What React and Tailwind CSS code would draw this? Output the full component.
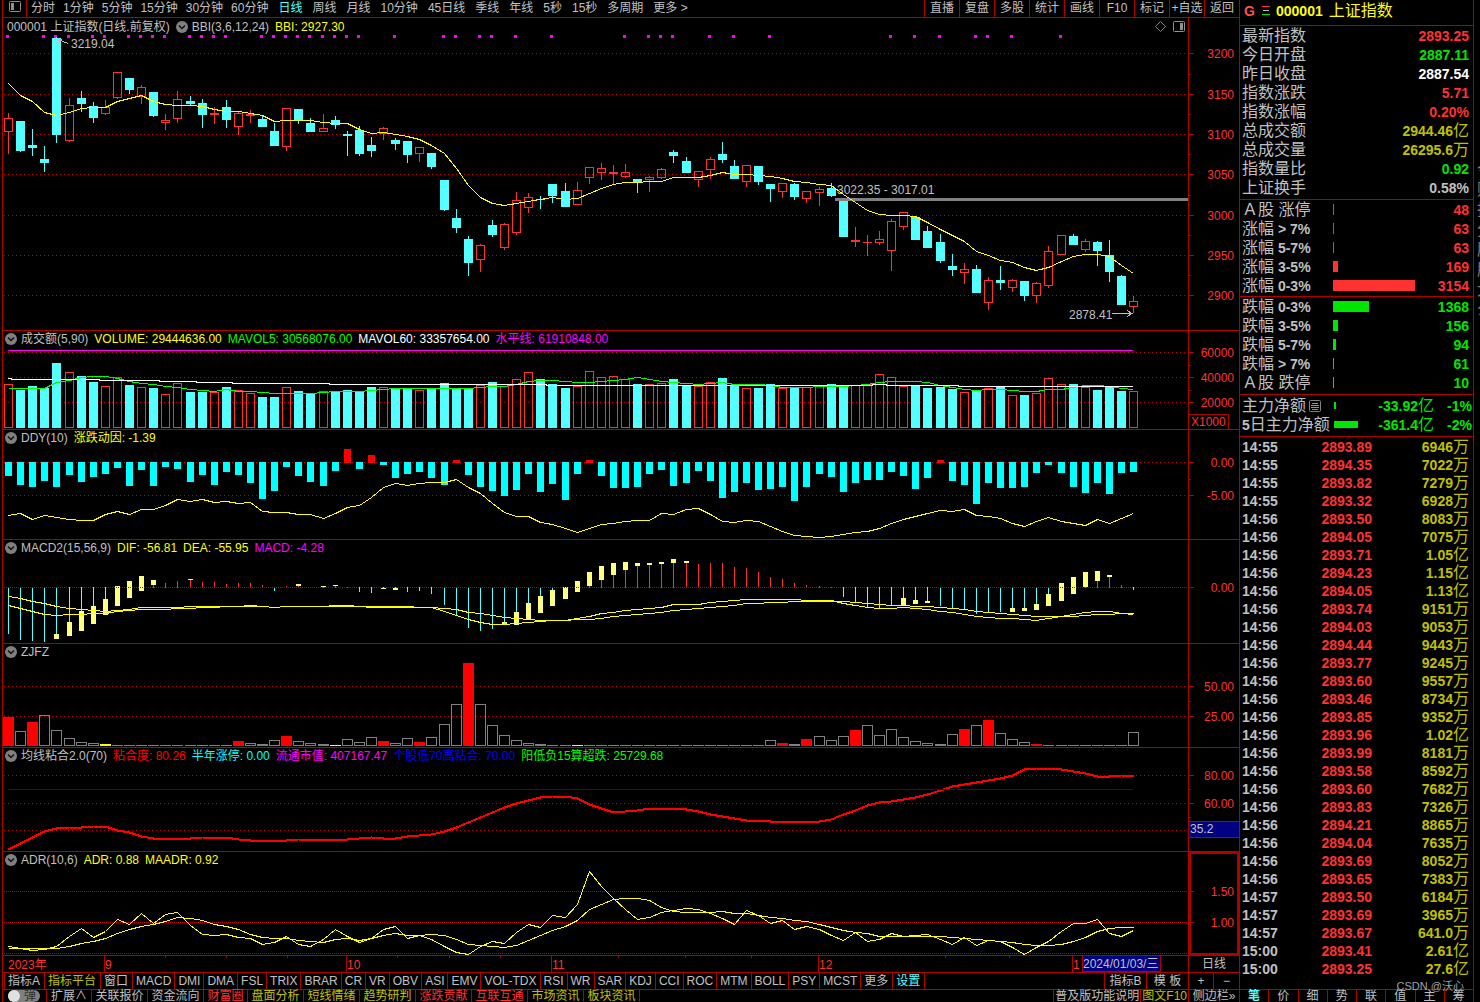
import React from 'react';

// [high, top, bottom, low, up]
const CANDLES = [
  [113, 118, 132, 154, 1], [121, 121, 151, 152, 0], [129, 145, 148, 156, 0], [146, 159, 163, 172, 0],
  [37, 38, 135, 143, 0], [98, 105, 141, 142, 1], [91, 98, 104, 112, 0], [102, 106, 118, 123, 0],
  [100, 107, 114, 115, 1], [72, 72, 98, 99, 1], [78, 78, 90, 94, 0], [85, 87, 97, 104, 1],
  [92, 92, 116, 117, 0], [114, 120, 123, 130, 1], [91, 99, 119, 123, 1], [96, 101, 104, 106, 0],
  [99, 103, 115, 128, 0], [107, 113, 115, 124, 1], [100, 107, 120, 128, 0], [112, 113, 127, 135, 1],
  [110, 114, 116, 123, 1], [116, 119, 127, 127, 0], [123, 131, 146, 146, 0], [108, 108, 147, 151, 1],
  [109, 109, 121, 124, 0], [118, 123, 132, 132, 0], [114, 128, 132, 132, 1], [116, 120, 125, 129, 0],
  [131, 134, 136, 156, 0], [126, 130, 154, 156, 0], [137, 145, 151, 157, 0], [127, 128, 134, 140, 1],
  [138, 140, 144, 150, 0], [141, 141, 155, 163, 0], [147, 147, 154, 162, 1], [153, 153, 167, 169, 0],
  [180, 180, 210, 211, 0], [209, 218, 228, 233, 0], [236, 239, 263, 276, 0], [244, 245, 260, 272, 1],
  [220, 225, 235, 237, 0], [223, 224, 248, 250, 1], [192, 200, 233, 235, 1], [193, 197, 208, 213, 1],
  [196, 199, 200, 209, 0], [184, 184, 196, 203, 0], [183, 191, 207, 207, 0], [182, 190, 205, 205, 1],
  [167, 167, 178, 184, 1], [163, 168, 173, 180, 1], [165, 172, 174, 184, 1], [164, 172, 177, 178, 1],
  [179, 179, 182, 193, 0], [176, 177, 180, 192, 1], [168, 169, 178, 179, 1], [150, 152, 156, 163, 0],
  [157, 161, 173, 173, 0], [171, 171, 180, 187, 1], [157, 159, 170, 179, 1], [142, 154, 160, 163, 0],
  [160, 166, 179, 179, 0], [165, 165, 182, 187, 1], [166, 166, 182, 185, 0], [184, 184, 189, 202, 0],
  [183, 183, 192, 198, 1], [183, 184, 197, 200, 0], [191, 191, 199, 203, 1], [187, 189, 193, 206, 1],
  [183, 188, 196, 197, 0], [201, 201, 237, 237, 0], [227, 240, 242, 247, 1], [235, 242, 243, 256, 1],
  [231, 239, 243, 245, 1], [219, 221, 251, 271, 1], [212, 212, 227, 230, 1], [217, 217, 240, 240, 0],
  [226, 231, 248, 248, 0], [234, 242, 261, 263, 0], [254, 266, 270, 276, 0], [263, 269, 273, 284, 1],
  [265, 269, 293, 293, 0], [277, 280, 303, 310, 1], [266, 280, 283, 290, 0], [279, 280, 288, 292, 1],
  [281, 281, 296, 301, 0], [282, 283, 296, 303, 1], [246, 251, 286, 288, 1], [235, 235, 255, 255, 1],
  [234, 236, 245, 245, 0], [239, 241, 250, 252, 1], [241, 242, 251, 266, 0], [240, 255, 272, 282, 0],
  [275, 276, 305, 305, 0], [296, 301, 307, 313, 1]
];

const BBI = [
  83, 95, 101, 112, 115, 112, 108, 107, 107, 101, 98, 95, 101, 104, 105, 105, 106, 109, 111, 111, 113, 115, 121, 120,
  120, 120, 122, 123, 123, 129, 133, 132, 134, 136, 139, 145, 153, 168, 185, 197, 203, 205, 203, 201, 199, 197, 199,
  198, 193, 188, 184, 182, 182, 181, 181, 177, 177, 177, 175, 172, 174, 174, 175, 176, 178, 181, 182, 184, 185, 194,
  202, 210, 214, 215, 215, 216, 222, 229, 235, 241, 251, 255, 260, 262, 267, 270, 267, 261, 256, 254, 254, 256, 265, 273
];

const SIGNALS = [
  0, 3, 4, 5, 7, 8, 10, 11, 12, 13, 15, 16, 17, 18, 21, 22, 23, 24, 25, 26, 27, 28, 29, 32, 36, 37, 39, 40, 42, 45,
  51, 53, 54, 55, 58, 60, 63, 73, 75, 77, 80, 81, 83, 87
];

const VOLUME = [
  384, 390, 386, 388, 363, 372, 376, 382, 386, 377, 385, 387, 388, 394, 383, 392, 392, 392, 387, 390, 393, 397, 397,
  387, 391, 393, 391, 391, 390, 391, 387, 387, 389, 388, 390, 388, 383, 388, 389, 385, 382, 386, 379, 372, 379, 384,
  388, 386, 371, 377, 376, 379, 384, 384, 383, 379, 385, 386, 382, 378, 385, 388, 388, 384, 388, 387, 387, 386, 384,
  386, 385, 384, 374, 377, 386, 385, 388, 387, 389, 392, 390, 388, 386, 395, 395, 393, 378, 384, 384, 387, 390, 386,
  391, 391
];

const MAVOL5 = [
  388, 388, 388, 388, 382, 380, 377, 376, 376, 378, 381, 383, 384, 386, 387, 389, 390, 391, 389, 391, 391, 392, 393,
  393, 393, 393, 392, 391, 391, 391, 390, 389, 388, 388, 388, 388, 388, 388, 388, 387, 386, 386, 384, 381, 380, 380,
  381, 382, 382, 381, 380, 379, 377, 379, 381, 382, 383, 384, 383, 382, 384, 384, 384, 385, 387, 387, 387, 386, 386,
  386, 385, 384, 382, 381, 381, 381, 382, 385, 387, 389, 390, 389, 389, 390, 391, 391, 389, 389, 387, 385, 385, 386,
  388, 389
];

const MAVOL60 = '8,378 15,379 99,379 100,380 159,380 160,381 196,381 197,382 232,382 233,383 329,383 330,384 546,384 547,385 872,385 873,384 886,384 887,385 958,385 959,386 1133,386';

const DDY = [
  476, 485, 487, 481, 487, 475, 482, 477, 474, 468, 486, 470, 486, 467, 469, 482, 475, 485, 472, 475, 483, 499, 491,
  467, 476, 482, 486, 471, 449, 469, 455, 465, 478, 474, 472, 478, 485, 460, 475, 487, 491, 496, 490, 474, 492, 484,
  500, 474, 460, 476, 488, 488, 487, 474, 470, 486, 483, 471, 481, 498, 492, 483, 490, 489, 487, 501, 487, 474, 477,
  492, 483, 480, 480, 472, 476, 489, 478, 460, 481, 485, 504, 483, 488, 488, 487, 473, 465, 473, 487, 493, 483, 494,
  473, 472
];

const DDY_LINE = [
  515, 513, 519, 515, 517, 519, 520, 520, 514, 511, 514, 509, 509, 505, 499, 501, 499, 502, 501, 503, 502, 511, 512,
  512, 514, 514, 518, 513, 507, 505, 497, 487, 483, 485, 483, 482, 482, 479, 487, 493, 503, 512, 516, 516, 522, 524,
  528, 532, 528, 524, 523, 521, 520, 520, 513, 514, 509, 508, 514, 521, 522, 520, 521, 526, 531, 535, 536, 537, 536,
  534, 532, 531, 528, 523, 519, 516, 513, 510, 511, 509, 515, 516, 518, 523, 526, 521, 517, 521, 523, 525, 519, 523,
  518, 513
];

// a number is a plain stick, a pair is a block on the stick
const MACD = [
  633, 639, 640, 641, [634, 639], [622, 636], [611, 631], [606, 624], [599, 615], [586, 606], [581, 598], [576, 591],
  [580, 585], 583, 581, [579, 580], 582, 582, 584, 583, 583, 585, 590, 586, [584, 586], 587, [586, 587], [585, 586],
  587, 591, 592, [588, 589], [588, 590], 591, 590, 593, 604, 614, 627, 630, 628, [622, 625], [612, 625], [603, 620],
  [596, 613], [590, 606], [587, 599], [581, 592], [572, 586], [566, 580], [563, 575], [562, 570], [563, 566],
  [563, 565], [562, 564], [559, 563], [561, 563], 564, 563, 563, 567, 568, 572, 577, 579, 583, 585, 586, 587, 596,
  602, 606, 608, 604, [598, 605], [600, 604], [601, 603], 605, 608, 609, 613, 612, 611, [608, 612], [608, 611],
  [604, 610], [594, 606], [583, 601], [577, 594], [572, 587], [571, 581], [575, 577], 585, 589
];

const DEA = [
  596, 598, 601, 603, 606, 608, 609, 610, 611, 610, 609, 607, 607, 607, 607, 606, 606, 606, 606, 606, 606, 606, 607,
  606, 606, 606, 606, 606, 606, 606, 607, 607, 607, 607, 607, 607, 608, 609, 612, 613, 615, 617, 618, 619, 620, 620,
  620, 619, 619, 618, 616, 615, 614, 613, 612, 610, 609, 608, 607, 606, 605, 603, 603, 602, 602, 601, 601, 601, 601,
  601, 602, 603, 604, 605, 605, 606, 606, 607, 608, 609, 611, 612, 613, 614, 615, 616, 616, 616, 616, 615, 614, 614,
  613, 613
];

const DIF = [
  605, 608, 611, 614, 615, 614, 614, 613, 613, 611, 610, 609, 609, 609, 608, 608, 607, 607, 606, 606, 605, 606, 607,
  606, 606, 606, 606, 605, 605, 606, 606, 606, 606, 606, 607, 607, 611, 615, 619, 622, 624, 624, 623, 622, 621, 620,
  620, 618, 616, 613, 612, 610, 609, 608, 607, 604, 604, 604, 602, 601, 600, 599, 599, 599, 599, 599, 600, 600, 600,
  603, 605, 607, 608, 608, 607, 608, 609, 611, 612, 614, 616, 617, 618, 618, 619, 620, 618, 616, 614, 612, 611, 611,
  613, 614
];

const ZJFZ = [
  717, 731, 722, 715, 730, 738, 742, 743, 744, 745, 745, 745, 745, 745, 745, 745, 745, 745, 745, 741, 743, 744, 740,
  736, 741, 743, 744, 745, 739, 742, 737, 741, 743, 738, 742, 737, 724, 704, 663, 704, 725, 735, 740, 743, 744, 745,
  745, 745, 745, 745, 745, 745, 745, 745, 745, 745, 745, 745, 745, 745, 745, 745, 745, 740, 743, 744, 739, 736, 740,
  736, 730, 725, 735, 729, 737, 741, 743, 744, 734, 729, 725, 720, 733, 739, 742, 744, 745, 745, 745, 745, 745, 745,
  745, 732
];
const ZJFZ_RED = [0, 2, 19, 23, 31, 34, 38, 64, 66, 70, 79, 81, 85];
const ZJFZ_YELLOW = [8, 27, 47];

const NIANHE = [
  849, 843, 837, 831, 828, 827, 827, 826, 826, 830, 832, 836, 838, 838, 838, 838, 837, 837, 837, 839, 840, 840, 840,
  840, 839, 839, 839, 839, 839, 838, 837, 838, 838, 836, 835, 834, 831, 827, 822, 817, 812, 807, 803, 800, 797, 796,
  796, 798, 804, 808, 812, 811, 810, 808, 808, 808, 809, 811, 814, 816, 818, 820, 820, 821, 821, 821, 821, 821, 819,
  814, 810, 805, 802, 801, 799, 797, 794, 790, 786, 784, 782, 780, 778, 775, 769, 768, 768, 769, 771, 773, 776, 776,
  775, 775
];

const ADR = [
  946, 948, 950, 949, 946, 936, 928, 937, 931, 919, 924, 913, 923, 914, 912, 925, 934, 935, 934, 937, 938, 944, 942,
  936, 944, 946, 939, 929, 936, 942, 938, 929, 926, 938, 935, 939, 946, 952, 954, 946, 941, 943, 932, 924, 927, 915,
  917, 904, 871, 886, 898, 909, 919, 917, 912, 910, 908, 909, 913, 918, 924, 910, 915, 923, 920, 929, 926, 929, 935,
  940, 932, 941, 939, 933, 936, 935, 934, 939, 944, 937, 945, 940, 941, 947, 954, 947, 941, 931, 923, 923, 919, 933,
  936, 930
];

const MAADR = [
  948, 948, 948, 948, 948, 946, 943, 941, 938, 933, 929, 926, 924, 921, 917, 918, 920, 924, 926, 929, 934, 937, 938,
  938, 940, 941, 942, 939, 938, 940, 938, 935, 933, 935, 935, 934, 935, 939, 944, 945, 946, 947, 945, 940, 935, 930,
  926, 920, 909, 904, 899, 898, 898, 900, 907, 911, 912, 912, 912, 911, 913, 913, 915, 917, 918, 920, 921, 924, 927,
  930, 932, 933, 936, 936, 936, 936, 936, 936, 937, 938, 939, 940, 941, 942, 944, 945, 945, 944, 941, 937, 931, 928,
  927, 927
];

const MINUTES = ['分时', '1分钟', '5分钟', '15分钟', '30分钟', '60分钟'];
const PERIODS = ['日线', '周线', '月线', '10分钟', '45日线', '季线', '年线', '5秒', '15秒', '多周期', '更多 >'];
const TOOLS = ['直播', '复盘', '多股', '统计', '画线', 'F10', '标记', '+自选', '返回'];

const INDICATORS = [
  '指标A', '指标平台', '窗口', 'MACD', 'DMI', 'DMA', 'FSL', 'TRIX', 'BRAR', 'CR', 'VR', 'OBV', 'ASI', 'EMV',
  'VOL-TDX', 'RSI', 'WR', 'SAR', 'KDJ', 'CCI', 'ROC', 'MTM', 'BOLL', 'PSY', 'MCST', '更多', '设置'
];

const EXTRAS = [
  { label: '关联报价', color: 'text-[#c0c0c0]' },
  { label: '资金流向', color: 'text-[#c0c0c0]' },
  { label: '财富圈', color: 'text-[#ff3232]' },
  { label: '盘面分析', color: 'text-[#c0c000]' },
  { label: '短线情绪', color: 'text-[#c0c000]' },
  { label: '趋势研判', color: 'text-[#c0c000]' },
  { label: '涨跌贡献', color: 'text-[#ff3232]' },
  { label: '互联互通', color: 'text-[#ff3232]' },
  { label: '市场资讯', color: 'text-[#c0c000]' },
  { label: '板块资讯', color: 'text-[#c0c000]' }
];

const QUOTES = [
  { label: '最新指数', value: '2893.25', color: 'text-[#ff3232]' },
  { label: '今日开盘', value: '2887.11', color: 'text-[#00e600]' },
  { label: '昨日收盘', value: '2887.54', color: 'text-white' },
  { label: '指数涨跌', value: '5.71', color: 'text-[#ff3232]' },
  { label: '指数涨幅', value: '0.20%', color: 'text-[#ff3232]' },
  { label: '总成交额', value: '2944.46', unit: '亿', color: 'text-[#c0c000]' },
  { label: '总成交量', value: '26295.6', unit: '万', color: 'text-[#c0c000]' },
  { label: '指数量比', value: '0.92', color: 'text-[#00e600]' },
  { label: '上证换手', value: '0.58%', color: 'text-[#c0c0c0]' }
];

const RISES = [
  { label: 'Ａ股 涨停', value: 48, width: 1 },
  { label: '涨幅', range: '> 7%', value: 63, width: 1 },
  { label: '涨幅', range: '5-7%', value: 63, width: 1 },
  { label: '涨幅', range: '3-5%', value: 169, width: 5 },
  { label: '涨幅', range: '0-3%', value: 3154, width: 82 }
];

const FALLS = [
  { label: '跌幅', range: '0-3%', value: 1368, width: 36 },
  { label: '跌幅', range: '3-5%', value: 156, width: 5 },
  { label: '跌幅', range: '5-7%', value: 94, width: 3 },
  { label: '跌幅', range: '> 7%', value: 61, width: 1 },
  { label: 'Ａ股 跌停', value: 10, width: 1 }
];

const TICKS = [
  ['14:55', '2893.89', '6946', '万'], ['14:55', '2894.35', '7022', '万'], ['14:55', '2893.82', '7279', '万'],
  ['14:55', '2893.32', '6928', '万'], ['14:56', '2893.50', '8083', '万'], ['14:56', '2894.05', '7075', '万'],
  ['14:56', '2893.71', '1.05', '亿'], ['14:56', '2894.23', '1.15', '亿'], ['14:56', '2894.05', '1.13', '亿'],
  ['14:56', '2893.74', '9151', '万'], ['14:56', '2894.03', '9053', '万'], ['14:56', '2894.44', '9443', '万'],
  ['14:56', '2893.77', '9245', '万'], ['14:56', '2893.60', '9557', '万'], ['14:56', '2893.46', '8734', '万'],
  ['14:56', '2893.85', '9352', '万'], ['14:56', '2893.96', '1.02', '亿'], ['14:56', '2893.99', '8181', '万'],
  ['14:56', '2893.58', '8592', '万'], ['14:56', '2893.60', '7682', '万'], ['14:56', '2893.83', '7326', '万'],
  ['14:56', '2894.21', '8865', '万'], ['14:56', '2894.04', '7635', '万'], ['14:56', '2893.69', '8052', '万'],
  ['14:56', '2893.65', '7383', '万'], ['14:57', '2893.50', '6184', '万'], ['14:57', '2893.69', '3965', '万'],
  ['14:57', '2893.67', '641.0', '万'], ['15:00', '2893.41', '2.61', '亿'], ['15:00', '2893.25', '27.6', '亿']
];

const barX = (i) => Math.floor(8.546 + i * 12.0976);
const toPoints = (values) => values.map((y, i) => `${barX(i) + 0.5},${y + 0.5}`).join(' ');

function Line({ values, color, width = 1 }) {
  return <polyline points={toPoints(values)} fill="none" stroke={color} strokeWidth={width} />;
}

function Grid({ ys, dense }) {
  return ys.map((y) => (
    <line
      key={y}
      x1="4"
      x2="1188"
      y1={y + 0.5}
      y2={y + 0.5}
      stroke="#c00000"
      strokeDasharray={dense ? '1 1' : '1 3'}
    />
  ));
}

function Plot({ top, height, className, children }) {
  return (
    <svg
      viewBox={`3 ${top} 1185 ${height}`}
      preserveAspectRatio="none"
      shapeRendering="crispEdges"
      className={`block w-full ${className}`}
    >
      {children}
    </svg>
  );
}

function Axis({ top, height, className, labels, minor = [], children }) {
  return (
    <svg
      viewBox={`1189 ${top} 50 ${height}`}
      shapeRendering="crispEdges"
      className={`block w-[51px] shrink-0 border-l border-[#b00000] ${className}`}
    >
      {labels.map(([y, text]) => (
        <g key={y}>
          <rect x="1189" y={y} width="5" height="1" fill="#b00000" />
          <text x="1234" y={y + 5} textAnchor="end" fontSize="12" fill="#ff3232">{text}</text>
        </g>
      ))}
      {minor.map((y) => <rect key={y} x="1189" y={y} width="2" height="1" fill="#b00000" />)}
      {children}
    </svg>
  );
}

function FoldButton() {
  return (
    <button type="button" aria-label="指标菜单" className="h-3 w-3 shrink-0">
      <svg viewBox="0 0 12 12" className="block h-3 w-3">
        <circle cx="6" cy="6" r="6" fill="#808080" />
        <path d="M3 4.5 L6 7.5 L9 4.5" fill="none" stroke="#101010" strokeWidth="1.5" />
      </svg>
    </button>
  );
}

function PanelHeader({ title, values = [] }) {
  return (
    <div className="flex h-[17px] items-center gap-[6px] pb-[2px] pl-[2px] whitespace-nowrap">
      <div className="flex items-center gap-1">
        <FoldButton />
        <h2>{title}</h2>
      </div>
      {values.map(([text, color]) => <span key={text} className={color}>{text}</span>)}
    </div>
  );
}

function Panel({ header, plot, axis }) {
  return (
    <section className="flex border-b border-[#b00000]">
      <div className="min-w-0 flex-1">
        {header}
        {plot}
      </div>
      {axis}
    </section>
  );
}

function Candle({ x, data }) {
  const [high, top, bottom, low, up] = data;
  const color = up ? '#ff3232' : '#54ffff';
  return (
    <g>
      <rect x={x} y={high} width="1" height={top - high} fill={color} />
      <rect x={x} y={bottom} width="1" height={low - bottom} fill={color} />
      {up && bottom - top > 1 ? (
        <rect x={x - 3.5} y={top + 0.5} width="8" height={bottom - top - 1} fill="none" stroke={color} />
      ) : (
        <rect x={x - 4} y={top} width="9" height={bottom - top} fill={color} />
      )}
    </g>
  );
}

function PricePanel() {
  return (
    <Panel
      header={
        <div className="flex h-[17px] items-center gap-[6px] pl-1 whitespace-nowrap">
          <h1>000001 上证指数(日线.前复权)</h1>
          <div className="flex items-center gap-1">
            <FoldButton />
            <span>BBI(3,6,12,24)</span>
          </div>
          <span className="text-[#ffff00]">BBI: 2927.30</span>
          <div className="ml-auto flex items-center gap-[7px] pr-[3px]">
            <svg viewBox="0 0 11 11" className="h-[11px] w-[11px]">
              <path d="M5.5 0.5 L10.5 5.5 L5.5 10.5 L0.5 5.5 Z" fill="none" stroke="#808080" />
            </svg>
            <svg viewBox="0 0 12 11" className="h-[11px] w-3">
              <rect x="0.5" y="0.5" width="11" height="10" rx="1" fill="none" stroke="#909090" />
              <rect x="7" y="2" width="3" height="7" fill="#909090" />
            </svg>
          </div>
        </div>
      }
      plot={
        <Plot top={35} height={295} className="h-[295px]">
          <Grid ys={[53, 94, 134, 174, 215, 255, 295]} />
          {SIGNALS.map((i) => <rect key={i} x={barX(i) - 2} y="35" width="3" height="3" fill="#ff00ff" />)}
          {CANDLES.map((candle, i) => <Candle key={i} x={barX(i)} data={candle} />)}
          <rect x="835" y="198" width="353" height="3" fill="#808080" />
          <text x="837" y="194" fontSize="12" fill="#c0c0c0">3022.35 - 3017.01</text>
          <Line values={BBI} color="#ffff00" />
          <text x="71" y="48" fontSize="12" fill="#c0c0c0">3219.04</text>
          <path d="M68 43.5 L58 39.5 M58 39.5 h4 M58 39.5 v4" fill="none" stroke="#c0c0c0" />
          <text x="1069" y="319" fontSize="12" fill="#c0c0c0">2878.41</text>
          <path d="M1112 313.5 H1132 M1127 310.5 L1132 313.5 L1127 316.5" fill="none" stroke="#c0c0c0" />
        </Plot>
      }
      axis={
        <Axis
          top={18}
          height={312}
          className="h-[312px]"
          labels={[[53, '3200'], [94, '3150'], [134, '3100'], [174, '3050'], [215, '3000'], [255, '2950'], [295, '2900']]}
          minor={[74, 114, 154, 195, 235, 275]}
        />
      }
    />
  );
}

function VolumePanel() {
  return (
    <Panel
      header={
        <PanelHeader
          title="成交额(5,90)"
          values={[
            ['VOLUME: 29444636.00', 'text-[#ffff00]'],
            ['MAVOL5: 30568076.00', 'text-[#00ff00]'],
            ['MAVOL60: 33357654.00', 'text-white'],
            ['水平线: 61910848.00', 'text-[#ff00ff]']
          ]}
        />
      }
      plot={
        <Plot top={348} height={81} className="h-[81px]">
          <Grid ys={[352, 377, 402]} />
          {VOLUME.map((y, i) => (
            CANDLES[i][4] ? (
              <rect key={i} x={barX(i) - 3.5} y={y + 0.5} width="8" height={427 - y} fill="none" stroke="#ff3232" />
            ) : (
              <rect key={i} x={barX(i) - 4} y={y} width="9" height={428 - y} fill="#54ffff" />
            )
          ))}
          <rect x="8" y="350" width="1125" height="1" fill="#ff00ff" />
          <Line values={MAVOL5} color="#00ff00" />
          <polyline points={MAVOL60} transform="translate(0 0.5)" fill="none" stroke="#ffffff" />
        </Plot>
      }
      axis={
        <Axis
          top={331}
          height={98}
          className="h-[98px]"
          labels={[[352, '60000'], [377, '40000'], [402, '20000']]}
          minor={[365, 390]}
        >
          <path d="M1189 414.5 H1228.5 V429" fill="none" stroke="#b00000" />
          <text x="1191" y="426" fontSize="12" fill="#ff3232">X1000</text>
        </Axis>
      }
    />
  );
}

function DdyPanel() {
  return (
    <Panel
      header={<PanelHeader title="DDY(10)" values={[['涨跌动因: -1.39', 'text-[#ffff00]']]} />}
      plot={
        <Plot top={447} height={92} className="h-[92px]">
          <Grid ys={[462, 495]} />
          {DDY.map((y, i) => (
            <rect
              key={i}
              x={barX(i) - 3}
              y={Math.min(y, 462)}
              width="7"
              height={y < 462 ? 463 - y : y - 462}
              fill={y < 462 ? '#ff0000' : '#00ffff'}
            />
          ))}
          <Line values={DDY_LINE} color="#ffff00" />
        </Plot>
      }
      axis={
        <Axis top={430} height={109} className="h-[109px]" labels={[[462, '0.00'], [495, '-5.00']]} minor={[479]} />
      }
    />
  );
}

function MacdPanel() {
  return (
    <Panel
      header={
        <PanelHeader
          title="MACD2(15,56,9)"
          values={[
            ['DIF: -56.81', 'text-[#ffff00]'],
            ['DEA: -55.95', 'text-[#ffff00]'],
            ['MACD: -4.28', 'text-[#ff00ff]']
          ]}
        />
      }
      plot={
        <Plot top={557} height={86} className="h-[86px]">
          {MACD.map((bar, i) => {
            const end = Array.isArray(bar) ? bar[0] : bar;
            return (
              <g key={i}>
                <rect
                  x={barX(i)}
                  y={Math.min(end, 587)}
                  width="1"
                  height={Math.abs(587 - end) + 1}
                  fill={end > 587 ? '#54ffff' : '#ff3232'}
                />
                {Array.isArray(bar) && (
                  <rect x={barX(i) - 2} y={bar[0]} width="5" height={bar[1] - bar[0]} fill="#ffff80" />
                )}
              </g>
            );
          })}
          <Grid ys={[587]} dense />
          <Line values={DEA} color="#ffff00" />
          <Line values={DIF} color="#ffff00" />
        </Plot>
      }
      axis={<Axis top={540} height={103} className="h-[103px]" labels={[[587, '0.00']]} />}
    />
  );
}

function ZjfzPanel() {
  return (
    <Panel
      header={<PanelHeader title="ZJFZ" />}
      plot={
        <Plot top={661} height={86} className="h-[86px]">
          <Grid ys={[686, 716]} />
          {ZJFZ.map((y, i) => {
            if (ZJFZ_RED.includes(i) || ZJFZ_YELLOW.includes(i) || y > 743) {
              let color = '#808080';
              if (ZJFZ_RED.includes(i)) color = '#ff0000';
              if (ZJFZ_YELLOW.includes(i)) color = '#ffff00';
              return <rect key={i} x={barX(i) - 5} y={y} width="11" height={746 - y} fill={color} />;
            }
            return (
              <rect key={i} x={barX(i) - 4.5} y={y + 0.5} width="10" height={745 - y} fill="none" stroke="#808080" />
            );
          })}
        </Plot>
      }
      axis={
        <Axis top={644} height={103} className="h-[103px]" labels={[[686, '50.00'], [716, '25.00']]} minor={[701]} />
      }
    />
  );
}

function NianhePanel() {
  return (
    <Panel
      header={
        <PanelHeader
          title="均线粘合2.0(70)"
          values={[
            ['粘合度: 80.26', 'text-[#ff0000]'],
            ['半年涨停: 0.00', 'text-[#00ffff]'],
            ['流通市值: 407167.47', 'text-[#ff00ff]'],
            ['个股低70高粘合: 70.00', 'text-[#0000ff]'],
            ['阳低负15算超跌: 25729.68', 'text-[#00ff00]']
          ]}
        />
      }
      plot={
        <Plot top={765} height={86} className="h-[86px]">
          <Grid ys={[775, 803, 830]} />
          <Line values={NIANHE} color="#ff0000" width={2} />
          <rect x="8" y="789" width="1125" height="1" fill="#0000ff" />
        </Plot>
      }
      axis={
        <Axis
          top={748}
          height={103}
          className="h-[103px]"
          labels={[[775, '80.00'], [803, '60.00']]}
          minor={[789, 817]}
        >
          <rect x="1189" y="821" width="50" height="17" fill="#b00000" />
          <rect x="1189" y="822" width="50" height="15" fill="#000080" />
          <text x="1190" y="833" fontSize="12" fill="#c0c0c0">35.2</text>
        </Axis>
      }
    />
  );
}

function AdrPanel() {
  return (
    <Panel
      header={
        <PanelHeader
          title="ADR(10,6)"
          values={[['ADR: 0.88', 'text-[#ffff00]'], ['MAADR: 0.92', 'text-[#ffff00]']]}
        />
      }
      plot={
        <Plot top={869} height={86} className="h-[86px]">
          <Grid ys={[891, 922, 953]} dense />
          <Line values={ADR} color="#ffff00" />
          <Line values={MAADR} color="#ffff00" />
        </Plot>
      }
      axis={
        <Axis
          top={852}
          height={103}
          className="h-[103px]"
          labels={[[891, '1.50'], [922, '1.00']]}
          minor={[907, 938]}
        >
          <rect x="1190" y="853" width="48" height="101" fill="none" stroke="#b00000" strokeWidth="2" />
        </Axis>
      }
    />
  );
}

function DateRow() {
  return (
    <div className="flex border-b border-[#b00000]">
      <div className="min-w-0 flex-1">
        <Plot top={956} height={16} className="h-4">
          {[165, 226, 287, 397, 449, 500, 618, 685, 751, 945, 1009].map((x) => (
            <rect key={x} x={x} y="956" width="1" height="2" fill="#b00000" />
          ))}
          <text x="8" y="969" fontSize="12" fill="#ff3232">2023年</text>
          {[[104, '9'], [346, '10'], [551, '11'], [818, '12'], [1072, '1']].map(([x, month]) => (
            <g key={x}>
              <rect x={x} y="956" width="1" height="16" fill="#b00000" />
              <text x={x + 1} y="969" fontSize="12" fill="#ff3232">{month}</text>
            </g>
          ))}
          <rect x="1082" y="956" width="79" height="16" fill="#b00000" />
          <rect x="1083" y="956" width="77" height="15" fill="#000080" />
          <text x="1083" y="968" fontSize="12" fill="#c0c0c0">2024/01/03/三</text>
        </Plot>
      </div>
      <button type="button" className="h-4 w-[51px] shrink-0 border-l border-[#b00000]">日线</button>
    </div>
  );
}

function Toolbar() {
  return (
    <header className="flex h-[18px] border-b border-[#b00000] whitespace-nowrap">
      <button type="button" aria-label="侧栏" className="flex w-6 shrink-0 justify-center border-r border-[#b00000] pt-px">
        <svg viewBox="0 0 12 11" className="h-[11px] w-3">
          <rect x="0.5" y="0.5" width="11" height="10" rx="1" fill="none" stroke="#909090" />
          <rect x="2" y="2" width="3" height="7" fill="#909090" />
        </svg>
      </button>
      <nav className="flex flex-1 gap-[10px] overflow-hidden pl-1 leading-[15px]">
        <div className="flex gap-2">
          {MINUTES.map((name) => <button key={name} type="button">{name}</button>)}
        </div>
        {PERIODS.map((name) => (
          <button key={name} type="button" className={name === '日线' ? 'text-[#54ffff]' : ''}>{name}</button>
        ))}
      </nav>
      <div className="flex leading-[15px]">
        {TOOLS.map((name) => (
          <button key={name} type="button" className="w-[35px] border-l border-[#b00000]">{name}</button>
        ))}
      </div>
    </header>
  );
}

function IndicatorTabs() {
  const classOf = (name) => {
    if (name === '指标平台') return 'pr-1 pl-[3px] text-[#c0c000]';
    if (name === '设置') return 'pr-1 pl-[3px] text-[#54ffff]';
    return /[^A-Z-]/.test(name) ? 'pr-1 pl-[3px]' : 'px-[3px]';
  };

  return (
    <nav className="flex h-[17px] border-b border-[#b00000] whitespace-nowrap">
      <div className="flex flex-1 overflow-hidden pl-px">
        {INDICATORS.map((name) => (
          <button key={name} type="button" className={`border-l border-[#b00000] ${classOf(name)}`}>{name}</button>
        ))}
        <span className="border-l border-[#b00000]" />
      </div>
      <button type="button" className="w-[42px] border-l border-[#b00000]">指标B</button>
      <button type="button" className="w-[42px] border-l border-[#b00000]">模 板</button>
      <button type="button" className="w-[25px] border-l border-[#b00000]">+</button>
      <button type="button" className="w-[26px] border-l border-[#b00000]">−</button>
    </nav>
  );
}

function ExtraTabs() {
  return (
    <nav className="flex h-3 leading-3 whitespace-nowrap">
      <label className="relative flex w-[43px] shrink-0 items-center pl-[5px]">
        <input
          type="checkbox"
          className="h-3 w-8 appearance-none rounded-full bg-[#808080] before:block before:h-3 before:w-3 before:rounded-full before:bg-[#e0e0e0]"
        />
        <span className="absolute left-[21px] text-[#303030]">弹</span>
      </label>
      <button type="button" className="border-l border-[#b00000] px-1">扩展∧</button>
      {EXTRAS.map((item) => (
        <button
          key={item.label}
          type="button"
          className={`border-l border-[#b00000] ${item.label.length > 3 ? 'w-14' : 'w-11'} ${item.color}`}
        >
          {item.label}
        </button>
      ))}
      <span className="flex-1 border-l border-[#b00000]" />
      <button type="button" className="border-l border-[#b00000] px-px">普及版功能说明</button>
      <button type="button" className="border-l border-[#b00000] px-px text-[#c0c000]">图文F10</button>
      <button type="button" className="w-[51px] border-l border-[#b00000]">侧边栏»</button>
    </nav>
  );
}

function SpreadRow({ row, barColor, textColor }) {
  return (
    <div className="flex h-[19px] items-center">
      <dt className="w-[91px] whitespace-pre">
        {row.label}
        {row.range && <b className="text-sm leading-none"> {row.range}</b>}
      </dt>
      <dd className="flex flex-1 items-center justify-between pr-1">
        <span className={`h-[11px] ${barColor}`} style={{ width: row.width }} />
        <b className={`text-sm ${textColor}`}>{row.value}</b>
      </dd>
    </div>
  );
}

function FundRow({ label, barClass, value, percent, icon }) {
  return (
    <div className="flex h-[19px] items-center text-[#00e600]">
      <dt className="flex w-[92px] items-center text-[#c0c0c0]">{label}{icon}</dt>
      <dd className="flex flex-1 items-center">
        <span className={`h-[7px] bg-[#00e600] ${barClass}`} />
        <span className="ml-auto"><b className="text-sm leading-none">{value}</b>亿</span>
        <b className="w-[39px] pr-px text-right text-sm">{percent}</b>
      </dd>
    </div>
  );
}

function QuotePanel() {
  return (
    <aside className="flex w-[234px] shrink-0 flex-col border-r border-[#b00000] text-base whitespace-nowrap">
      <div className="flex h-[26px] items-center border-b border-[#b00000] pb-1 pl-1 text-[#ffff00]">
        <b className="w-[18px] text-sm text-[#ff5050]">G</b>
        <svg viewBox="0 0 8 10" className="h-[10px] w-2">
          <rect x="0" y="0" width="8" height="1" fill="#ff3232" />
          <rect x="1" y="4" width="6" height="1" fill="#c0c0c0" />
          <rect x="0" y="8" width="8" height="1" fill="#00e600" />
        </svg>
        <b className="ml-[6px] text-sm">000001</b>
        <span className="ml-[6px]">上证指数</span>
      </div>

      <dl className="border-b border-[#b00000] pb-[2px] pl-[2px]">
        {QUOTES.map((q) => (
          <div key={q.label} className="flex h-[19px] items-center justify-between pr-1">
            <dt>{q.label}</dt>
            <dd className={q.color}><b className="text-sm leading-none">{q.value}</b>{q.unit}</dd>
          </div>
        ))}
      </dl>

      <dl className="border-b border-[#b00000] pb-px pl-[2px]">
        {RISES.map((row) => (
          <SpreadRow key={row.label + row.range} row={row} barColor="bg-[#ff3232]" textColor="text-[#ff3232]" />
        ))}
      </dl>

      <dl className="border-b border-[#b00000] pb-[2px] pl-[2px]">
        {FALLS.map((row) => (
          <SpreadRow key={row.label + row.range} row={row} barColor="bg-[#00e600]" textColor="text-[#00e600]" />
        ))}
      </dl>

      <dl className="border-b border-[#b00000] pt-px pb-[2px] pl-[2px]">
        <FundRow
          label="主力净额"
          barClass="w-[2px]"
          value="-33.92"
          percent="-1%"
          icon={
            <svg viewBox="0 0 12 12" className="ml-[3px] h-3 w-3">
              <rect x="0.5" y="0.5" width="11" height="11" rx="1" fill="none" stroke="#808080" />
              <path d="M3 3.5 h6 M2 5.5 h8 M2 7.5 h8 M3 9.5 h6" stroke="#909090" shapeRendering="crispEdges" />
            </svg>
          }
        />
        <FundRow
          label={<span><b className="text-sm leading-none">5</b>日主力净额</span>}
          barClass="w-6"
          value="-361.4"
          percent="-2%"
        />
      </dl>

      <table className="mt-px w-full">
        <tbody>
          {TICKS.map(([time, price, amount, unit], i) => (
            <tr key={i} className="h-[18px] leading-[18px]">
              <td className="w-[60px] p-0 pl-[2px] text-sm leading-[18px] font-bold">{time}</td>
              <td className="w-[72px] p-0 text-right text-sm leading-[18px] font-bold text-[#ff3232]">{price}</td>
              <td className="p-0 pr-1 text-right text-[#c0c000]"><b className="text-sm leading-none">{amount}</b>{unit}</td>
            </tr>
          ))}
        </tbody>
      </table>

      <nav className="mt-auto flex h-[13px] shrink-0 border-t border-[#b00000] text-xs leading-3">
        {['笔', '价', '细', '势', '联', '值', '主', '筹'].map((name, i) => (
          <button
            key={name}
            type="button"
            className={i === 0 ? 'flex-1 font-bold text-[#54ffff]' : 'flex-1 border-l border-[#b00000]'}
          >
            {name}
          </button>
        ))}
      </nav>
    </aside>
  );
}

export default function App() {
  return (
    <div className="relative flex h-screen overflow-hidden bg-black font-['Liberation_Sans','Noto_Sans_CJK_SC',sans-serif] text-xs text-[#c0c0c0]">
      <main className="ml-[2px] min-w-0 flex-1 border-x border-[#b00000]">
        <Toolbar />
        <PricePanel />
        <VolumePanel />
        <DdyPanel />
        <MacdPanel />
        <ZjfzPanel />
        <NianhePanel />
        <AdrPanel />
        <DateRow />
        <IndicatorTabs />
        <ExtraTabs />
      </main>
      <QuotePanel />
      {/* next docked pane, only its edge shows */}
      <div className="w-[6px] shrink-0 overflow-hidden pt-[160px] pl-[3px] text-base leading-5 text-[#808080]">
        <div className="w-4">今财拍分股股大公</div>
      </div>
      <span className="absolute right-4 bottom-2 text-[11px] text-[#a0a0a0]">CSDN @沃心</span>
    </div>
  );
}
